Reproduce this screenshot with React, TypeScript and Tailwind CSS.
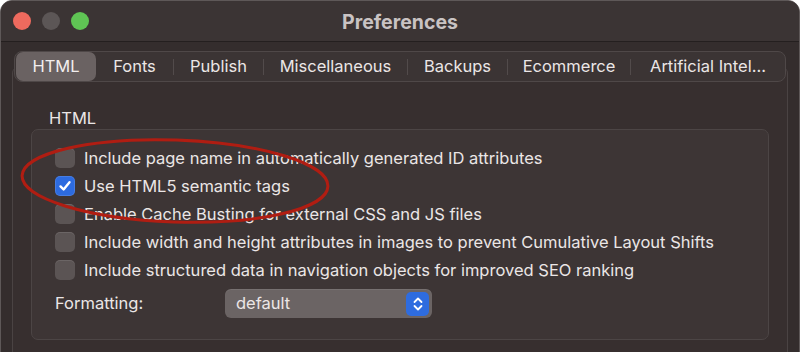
const tabs = ["HTML", "Fonts", "Publish", "Miscellaneous", "Backups", "Ecommerce", "Artificial Intel…"]

const options = [
  { label: "Include page name in automatically generated ID attributes", checked: false },
  { label: "Use HTML5 semantic tags", checked: true },
  { label: "Enable Cache Busting for external CSS and JS files", checked: false },
  { label: "Include width and height attributes in images to prevent Cumulative Layout Shifts", checked: false },
  { label: "Include structured data in navigation objects for improved SEO ranking", checked: false },
]

function Checkbox({ checked }: { checked: boolean }) {
  if (checked) {
    return (
      <div className="flex h-[20px] w-[20px] shrink-0 items-center justify-center rounded-[5px] bg-[#2d6be0] shadow-[inset_0_0_0_1px_rgba(255,255,255,0.12)]">
        <svg width="14" height="14" viewBox="0 0 14 14">
          <path d="M2.5 7.4 L5.6 10.5 L11.5 3.2" fill="none" stroke="white" strokeWidth="2.4" strokeLinecap="round" strokeLinejoin="round" />
        </svg>
      </div>
    )
  }
  return <div className="h-[20px] w-[20px] shrink-0 rounded-[5px] bg-[#5b5454] shadow-[inset_0_1px_0_rgba(255,255,255,0.1)]" />
}

export default function App() {
  return (
    <div className="h-[352px] w-[800px] overflow-hidden bg-white font-['Inter',sans-serif] text-[16.5px] text-[#ebe6e6]">
      <div className="flex h-[360px] flex-col overflow-hidden rounded-t-[12px] border border-[#5e5858] bg-[#342d2d]">
        {/* title bar */}
        <div className="relative flex h-[41px] shrink-0 items-center border-b border-[#241f1f] bg-[#3b3434]">
          <div className="ml-[12px] flex gap-[11px]">
            <span className="h-[18px] w-[18px] rounded-full bg-[#ee6a5e]" />
            <span className="h-[18px] w-[18px] rounded-full bg-[#5c5656]" />
            <span className="h-[18px] w-[18px] rounded-full bg-[#5fc454]" />
          </div>
          <div className="absolute inset-x-0 top-[7px] text-center text-[19.5px] font-bold text-[#c9c3c3]">Preferences</div>
        </div>

        {/* body */}
        <div className="relative flex-1 px-[11px] pt-[9px]">
          <div className="relative z-10 mx-[2px] flex h-[31px] items-center rounded-[8px] border border-[#4f4848] bg-[#3b3434] px-[1px]">
            {tabs.map((t, i) => (
              <div key={t} className="flex items-center">
                {i > 1 && <span className="h-[16px] w-px bg-[#524b4b]" />}
                <div
                  className={
                    i === 0
                      ? "flex h-[29px] w-[80px] items-center justify-center rounded-[7px] bg-[#6a6262] text-[#f2eeee]"
                      : i === 1
                        ? "flex h-[29px] w-[77px] items-center justify-center"
                        : i === 2
                          ? "flex h-[29px] w-[89px] items-center justify-center"
                          : i === 3
                            ? "flex h-[29px] w-[143px] items-center justify-center"
                            : i === 4
                              ? "flex h-[29px] w-[99px] items-center justify-center"
                              : i === 5
                                ? "flex h-[29px] w-[122px] items-center justify-center"
                                : "flex h-[29px] w-[154px] items-center justify-center"
                  }
                >
                  {t}
                </div>
              </div>
            ))}
          </div>

          <div className="-mt-[15px] h-[320px] rounded-[6px] border border-[#4a4343] bg-[#372f2f] px-[18px] pt-[40px]">
            <div className="ml-[18px] leading-[20px]">HTML</div>
            <div className="relative mt-[1px] h-[211px] rounded-[7px] border border-[#4c4545] bg-[#3d3535] pl-[23px] pt-[18px]">
              <div className="flex flex-col gap-[8px]">
                {options.map((o) => (
                  <div key={o.label} className="flex h-[20px] items-center gap-[9px]">
                    <Checkbox checked={o.checked} />
                    <span className="whitespace-nowrap leading-[20px]">{o.label}</span>
                  </div>
                ))}
              </div>
              <div className="mt-[9px] flex items-center">
                <span className="w-[170px]">Formatting:</span>
                <div className="flex h-[29px] w-[207px] items-center justify-between rounded-[6px] bg-[#6b6464] pl-[11px] pr-[3px] shadow-[inset_0_1px_0_rgba(255,255,255,0.08)]">
                  <span>default</span>
                  <div className="flex h-[24px] w-[23px] items-center justify-center rounded-[5px] bg-[#2e6cdf]">
                    <svg width="12" height="18" viewBox="0 0 12 18">
                      <path d="M2.5 7 L6 3.5 L9.5 7 M2.5 11 L6 14.5 L9.5 11" fill="none" stroke="white" strokeWidth="1.8" strokeLinecap="round" strokeLinejoin="round" />
                    </svg>
                  </div>
                </div>
              </div>
            </div>
          </div>

          {/* red annotation ellipse */}
          <svg className="pointer-events-none absolute left-0 top-0" width="800" height="320">
            <ellipse cx="174" cy="139" rx="153" ry="41" fill="none" stroke="#b01d12" strokeWidth="3" transform="rotate(2 174 139)" />
          </svg>
        </div>
      </div>
    </div>
  )
}
